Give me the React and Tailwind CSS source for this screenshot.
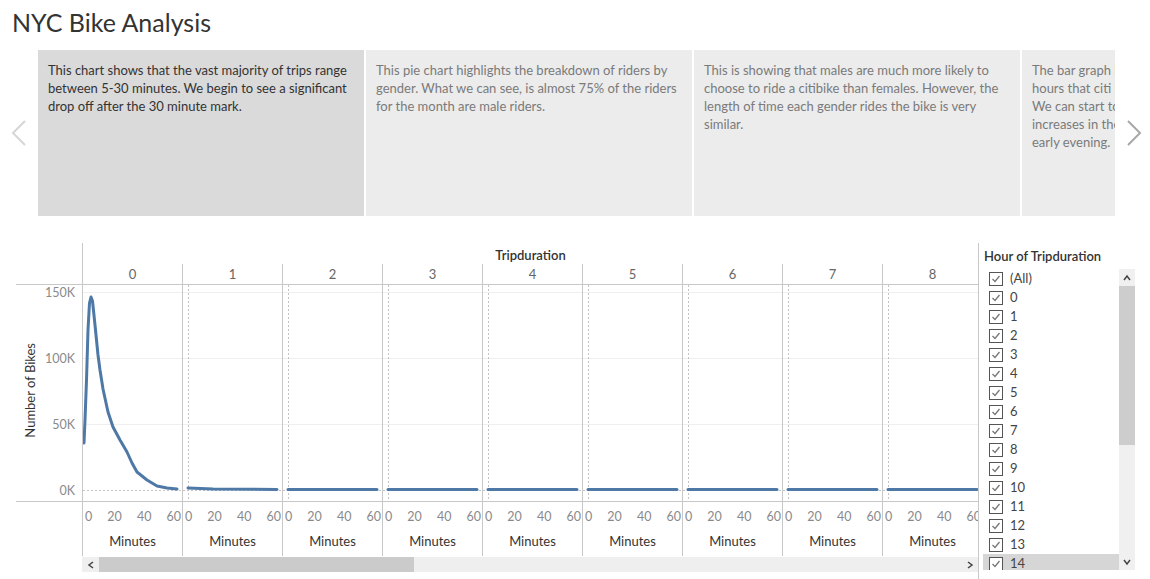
import { Fragment } from 'react'

const CARDS = [
  {
    id: 'duration',
    active: true,
    lines: [
      'This chart shows that the vast majority of trips range',
      'between 5-30 minutes. We begin to see a significant',
      'drop off after the 30 minute mark.',
    ],
  },
  {
    id: 'gender',
    lines: [
      'This pie chart highlights the breakdown of riders by',
      'gender. What we can see, is almost 75% of the riders',
      'for the month are male riders.',
    ],
  },
  {
    id: 'gender-duration',
    lines: [
      'This is showing that males are much more likely to',
      'choose to ride a citibike than females. However, the',
      'length of time each gender rides the bike is very',
      'similar.',
    ],
  },
  {
    id: 'hours',
    lines: [
      'The bar graph looks at the peak',
      'hours that citi bikes are being used.',
      'We can start to see a spike that',
      'increases in the morning and again in the',
      'early evening.',
    ],
  },
]

const PANES = [0, 1, 2, 3, 4, 5, 6, 7, 8]
const LEGEND = ['(All)', ...Array.from({ length: 15 }, (_, i) => String(i))]
const Y_LABELS = ['150K', '100K', '50K', '0K']

// svg coords inside a pane: x = px from pane content left, y = px from plot top
const CURVE =
  'M1 158 L2 135 L3.5 95 L5 45 L6.5 18 L8 12 L9.5 16 L12 40 L15 70 L17 85 L20 104 L25 127 L30 142 L37 155 L44 167 L49 178 L54 187 L64 195 L74 201 L84 203 L94 204'

function Chevron({ dir, className, size = 8, stroke = '#444', width = 1.5 }) {
  const pts = {
    left: '6,1 2,4 6,7',
    right: '2,1 6,4 2,7',
    up: '1,6 4,2 7,6',
    down: '1,2 4,6 7,2',
  }[dir]
  return (
    <svg width={size} height={size} viewBox="0 0 8 8" className={className} aria-hidden>
      <polyline points={pts} fill="none" stroke={stroke} strokeWidth={width} />
    </svg>
  )
}

function PanePlot({ index }) {
  const path =
    index === 0 ? CURVE : index === 1 ? 'M5 203 L30 204 L94 204.5' : 'M5 204.5 L94 204.5'
  return (
    <svg width="99" height="216" viewBox="0 0 99 216" className="block">
      {[7, 73, 139].map((y) => (
        <line key={y} x1="0" x2="99" y1={y + 0.5} y2={y + 0.5} stroke="#efefef" />
      ))}
      <line x1="0" x2="99" y1="205.5" y2="205.5" stroke="#c4c4c4" strokeDasharray="2 2" />
      {index > 0 ? (
        <line x1="5.5" x2="5.5" y1="0" y2="216" stroke="#c4c4c4" strokeDasharray="2 2" />
      ) : null}
      <path
        d={path}
        fill="none"
        stroke="#4e79a7"
        strokeWidth="3"
        strokeLinecap="round"
        strokeLinejoin="round"
      />
    </svg>
  )
}

function Pane({ index }) {
  return (
    <div className="flex w-[100px] shrink-0 flex-col border-l border-[#c8c8c8]">
      <div className="h-[20px] text-center text-[13px] leading-[20px] text-[#666]">{index}</div>
      <div className="h-[218px] border-y border-[#c8c8c8]">
        <PanePlot index={index} />
      </div>
      <div className="flex h-[28px] justify-between pl-[2px] pr-[1px] pt-[8px] text-[12.5px] leading-[14px] text-[#8a8a8a]">
        <span>0</span>
        <span>20</span>
        <span>40</span>
        <span>60</span>
      </div>
      <div className="h-[26px] pt-[4px] text-center text-[13px] leading-[14px] text-[#333]">
        Minutes
      </div>
    </div>
  )
}

function Checkbox() {
  return (
    <span className="flex size-[14px] items-center justify-center border border-[#555] bg-white">
      <svg width="10" height="10" viewBox="0 0 10 10" aria-hidden>
        <polyline points="1.5,5 4,7.5 8.5,2" fill="none" stroke="#777" strokeWidth="1.3" />
      </svg>
    </span>
  )
}

export default function App() {
  return (
    <div className="h-[579px] w-[1150px] overflow-hidden bg-white font-[Lato,'Liberation_Sans',sans-serif] text-[#333]">
      <header className="h-[50px] pl-[12px] pt-[7px] text-[25px] leading-[30px] text-[#333]">
        NYC Bike Analysis
      </header>

      <section className="flex h-[166px]">
        <button type="button" className="flex w-[38px] items-center justify-center">
          <svg width="16" height="26" viewBox="0 0 16 26" aria-hidden>
            <polyline points="14,1 2,13 14,25" fill="none" stroke="#d6d6d6" strokeWidth="2" />
          </svg>
        </button>
        <div className="flex w-[1077px] gap-[2px] overflow-hidden">
          {CARDS.map((card) => (
            <div
              key={card.id}
              className={[
                'w-[326px] shrink-0 overflow-hidden px-[10px] pt-[11px] text-[13px] leading-[18px] whitespace-nowrap',
                card.active ? 'bg-[#dadada] text-[#333]' : 'bg-[#ececec] text-[#7a7a7a]',
              ].join(' ')}
            >
              {card.lines.map((line, i) => (
                <Fragment key={i}>
                  {line}
                  <br />
                </Fragment>
              ))}
            </div>
          ))}
        </div>
        <button type="button" className="flex flex-1 items-center justify-center pl-[2px]">
          <svg width="16" height="26" viewBox="0 0 16 26" aria-hidden>
            <polyline points="2,1 14,13 2,25" fill="none" stroke="#a8a8a8" strokeWidth="2" />
          </svg>
        </button>
      </section>

      <section className="mt-[27px] flex h-[336px]">
        <div className="flex w-[978px] shrink-0 flex-col">
          <div className="flex h-[21px]">
            <div className="w-[82px] shrink-0" />
            <div className="flex-1 border-l border-[#c8c8c8] pt-[5px] text-center text-[13px] font-semibold leading-[14px] text-[#333]">
              Tripduration
            </div>
          </div>

          <div className="flex">
            <div className="flex w-[82px] shrink-0 flex-col">
              <div className="h-[20px]" />
              <div className="ml-[16px] flex h-[218px] border-y border-[#c8c8c8]">
                <div className="flex w-[32px] items-center justify-center pb-[6px]">
                  <span className="rotate-180 text-[13px] leading-[14px] text-[#333] [writing-mode:vertical-rl]">
                    Number of Bikes
                  </span>
                </div>
                <div className="flex flex-1 flex-col pr-[7px] pt-[1px] text-right text-[12.5px] leading-[14px] text-[#8a8a8a]">
                  {Y_LABELS.map((label) => (
                    <div key={label} className="h-[66px] shrink-0">
                      {label}
                    </div>
                  ))}
                </div>
              </div>
            </div>
            <div className="flex w-[896px] overflow-hidden">
              {PANES.map((p) => (
                <Pane key={p} index={p} />
              ))}
            </div>
          </div>

          <div className="mt-[1px] flex h-[15px]">
            <div className="w-[82px] shrink-0" />
            <div className="flex w-[896px] bg-[#efefef]">
              <span className="flex w-[17px] items-center justify-center">
                <Chevron dir="left" />
              </span>
              <span className="w-[315px] bg-[#cbcbcb]" />
              <span className="flex-1" />
              <span className="flex w-[17px] items-center justify-center">
                <Chevron dir="right" />
              </span>
            </div>
          </div>
        </div>

        <aside className="flex flex-1 flex-col border-l border-[#c8c8c8]">
          <div className="h-[26px] pl-[5px] pt-[6px] text-[13px] font-semibold leading-[14px] text-[#333]">
            Hour of Tripduration
          </div>
          <div className="ml-[4px] flex h-[301px]">
            <ul className="w-[136px] overflow-hidden">
              {LEGEND.map((item) => (
                <li
                  key={item}
                  className={[
                    'flex h-[19px] items-center pl-[6px] text-[13px] text-[#444]',
                    item === '14' ? 'bg-[#d6d6d6]' : '',
                  ].join(' ')}
                >
                  <Checkbox />
                  <span className="ml-[7px]">{item}</span>
                </li>
              ))}
            </ul>
            <div className="flex w-[16px] flex-col bg-[#f0f0f0]">
              <span className="flex h-[17px] items-center justify-center">
                <Chevron dir="up" />
              </span>
              <span className="h-[159px] bg-[#cdcdcd]" />
              <span className="flex-1" />
              <span className="flex h-[17px] items-center justify-center">
                <Chevron dir="down" />
              </span>
            </div>
          </div>
        </aside>
      </section>
    </div>
  )
}
